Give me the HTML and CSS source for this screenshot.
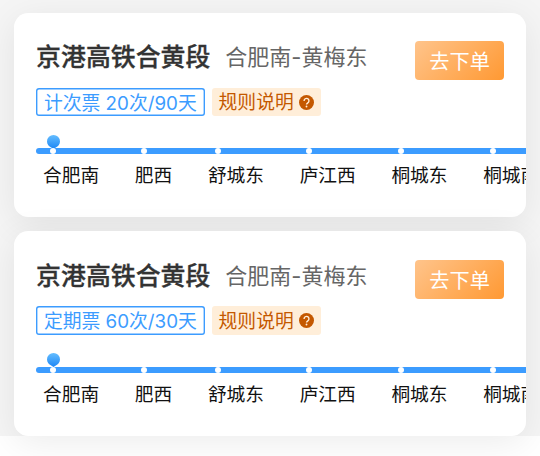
FILE: index.html
```html
<!DOCTYPE html>
<html lang="zh-CN">
<head>
  <meta charset="utf-8">
  <title>京港高铁合黄段</title>
  <link rel="stylesheet" href="styles.css">
</head>
<body>
  <div class="list">
    <div class="card">
      <div class="card-top">
        <div class="name">京港高铁合黄段</div>
        <div class="route">合肥南-黄梅东</div>
        <div class="btn">去下单</div>
      </div>
      <div class="tags">
        <div class="tag">计次票 20次/90天</div>
        <div class="rule"><span>规则说明</span>
          <svg class="help" viewBox="0 0 16 16"><circle cx="8" cy="8" r="8" fill="#c45800"/><path d="M5.4 6.3a2.600 2.600 0 1 1 4 2.100c-1 .7-1.400 1-1.400 1.800" fill="none" stroke="#ffeed9" stroke-width="1.5"/><circle cx="8" cy="12.300" r="1" fill="#ffeed9"/></svg>
        </div>
      </div>
      <div class="stations">
        <div class="station">
          <svg class="pin" viewBox="0 0 13 14"><defs><linearGradient id="pinFill" x1="0" y1="0" x2="0" y2="1"><stop offset="0" stop-color="#64bdff"/><stop offset="1" stop-color="#1c86f5"/></linearGradient></defs><path d="M6.5 0a6.5 6.5 0 0 1 6.5 6.4c0 3-2 4.900-4.200 6L6.500 14l-2.300-1.600C2 11.300 0 9.400 0 6.400A6.500 6.500 0 0 1 6.500 0z" fill="url(#pinFill)"/></svg>
          合肥南
        </div>
        <div class="station">肥西</div>
        <div class="station">舒城东</div>
        <div class="station">庐江西</div>
        <div class="station">桐城东</div>
        <div class="station">桐城南</div>
      </div>
    </div>
    <div class="card">
      <div class="card-top">
        <div class="name">京港高铁合黄段</div>
        <div class="route">合肥南-黄梅东</div>
        <div class="btn">去下单</div>
      </div>
      <div class="tags">
        <div class="tag">定期票 60次/30天</div>
        <div class="rule"><span>规则说明</span>
          <svg class="help" viewBox="0 0 16 16"><circle cx="8" cy="8" r="8" fill="#c45800"/><path d="M5.4 6.3a2.600 2.600 0 1 1 4 2.100c-1 .7-1.400 1-1.400 1.800" fill="none" stroke="#ffeed9" stroke-width="1.5"/><circle cx="8" cy="12.300" r="1" fill="#ffeed9"/></svg>
        </div>
      </div>
      <div class="stations">
        <div class="station">
          <svg class="pin" viewBox="0 0 13 14"><path d="M6.5 0a6.5 6.5 0 0 1 6.5 6.4c0 3-2 4.900-4.200 6L6.500 14l-2.300-1.600C2 11.300 0 9.400 0 6.400A6.500 6.500 0 0 1 6.500 0z" fill="url(#pinFill)"/></svg>
          合肥南
        </div>
        <div class="station">肥西</div>
        <div class="station">舒城东</div>
        <div class="station">庐江西</div>
        <div class="station">桐城东</div>
        <div class="station">桐城南</div>
      </div>
    </div>
  </div>
</body>
</html>
```

FILE: styles.css
```css
* {
  box-sizing: border-box;
}

body {
  height: 456px;
  margin: 0;
  background: #fff;
  font-family: Inter, "Noto Sans CJK SC", sans-serif;
}

.list {
  height: 436px;
  padding: 12.5px 14.3px 0;
  background: #f5f5f5;
}

.card {
  height: 204.5px;
  margin-bottom: 14.3px;
  padding: 28.5px 0 0 21.8px;
  border-radius: 14.3px;
  background: #fff;
  box-shadow: 0 7px 36px rgba(0, 0, 0, 0.08);
}

.card-top {
  display: flex;
  height: 39px;
  padding-right: 21.6px;
  white-space: nowrap;
}

.name {
  color: #333;
  font-size: 24.9px;
  font-weight: 500;
  line-height: 32px;
  -webkit-text-stroke: 0.3px #333;
}

.route {
  margin-left: 15px;
  color: #666;
  font-size: 22px;
  line-height: 33px;
}

.btn {
  width: 89px;
  height: 39px;
  margin-left: auto;
  border-radius: 4px;
  background: linear-gradient(135deg, #ffc48b, #ff9933);
  color: #fff;
  font-size: 20.2px;
  line-height: 41px;
  text-align: center;
}

.tags {
  display: flex;
  height: 28.8px;
  margin-top: 7.7px;
  font-size: 18.8px;
  line-height: 30px;
  white-space: nowrap;
}

.tag {
  width: 168.5px;
  border-radius: 3px;
  box-shadow: inset 0 0 0 1.4px #3c9cff;
  color: #3c9cff;
  line-height: 31px;
  text-align: center;
}

.rule {
  display: flex;
  align-items: center;
  width: 109.5px;
  margin-left: 7px;
  padding-left: 7px;
  border-radius: 3px;
  background: #ffeed9;
  color: #c45800;
}

.rule span {
  padding-top: 2px;
}

.help {
  width: 15px;
  height: 15px;
  margin-left: 5.5px;
}

.stations {
  display: flex;
  height: 76px;
  margin-top: 7.7px;
  padding-top: 24px;
  overflow: hidden;
  white-space: nowrap;
}

.station {
  position: relative;
  flex: none;
  padding: 13.8px 28.7px 0 7px;
  color: #111;
  font-size: 18.7px;
  line-height: 28px;
}

/* track segment */
.station::before {
  content: "";
  position: absolute;
  top: 0;
  left: 0;
  width: 100%;
  height: 5.8px;
  background: #3c9cff;
}

.station:first-child::before {
  border-radius: 3px 0 0 3px;
}

/* stop dot */
.station::after {
  content: "";
  position: absolute;
  top: 0;
  left: 13.6px;
  width: 6px;
  height: 6px;
  border-radius: 50%;
  background: #fff;
}

.pin {
  position: absolute;
  top: -13.5px;
  left: 10.6px;
  width: 13px;
  height: 14px;
}
```
